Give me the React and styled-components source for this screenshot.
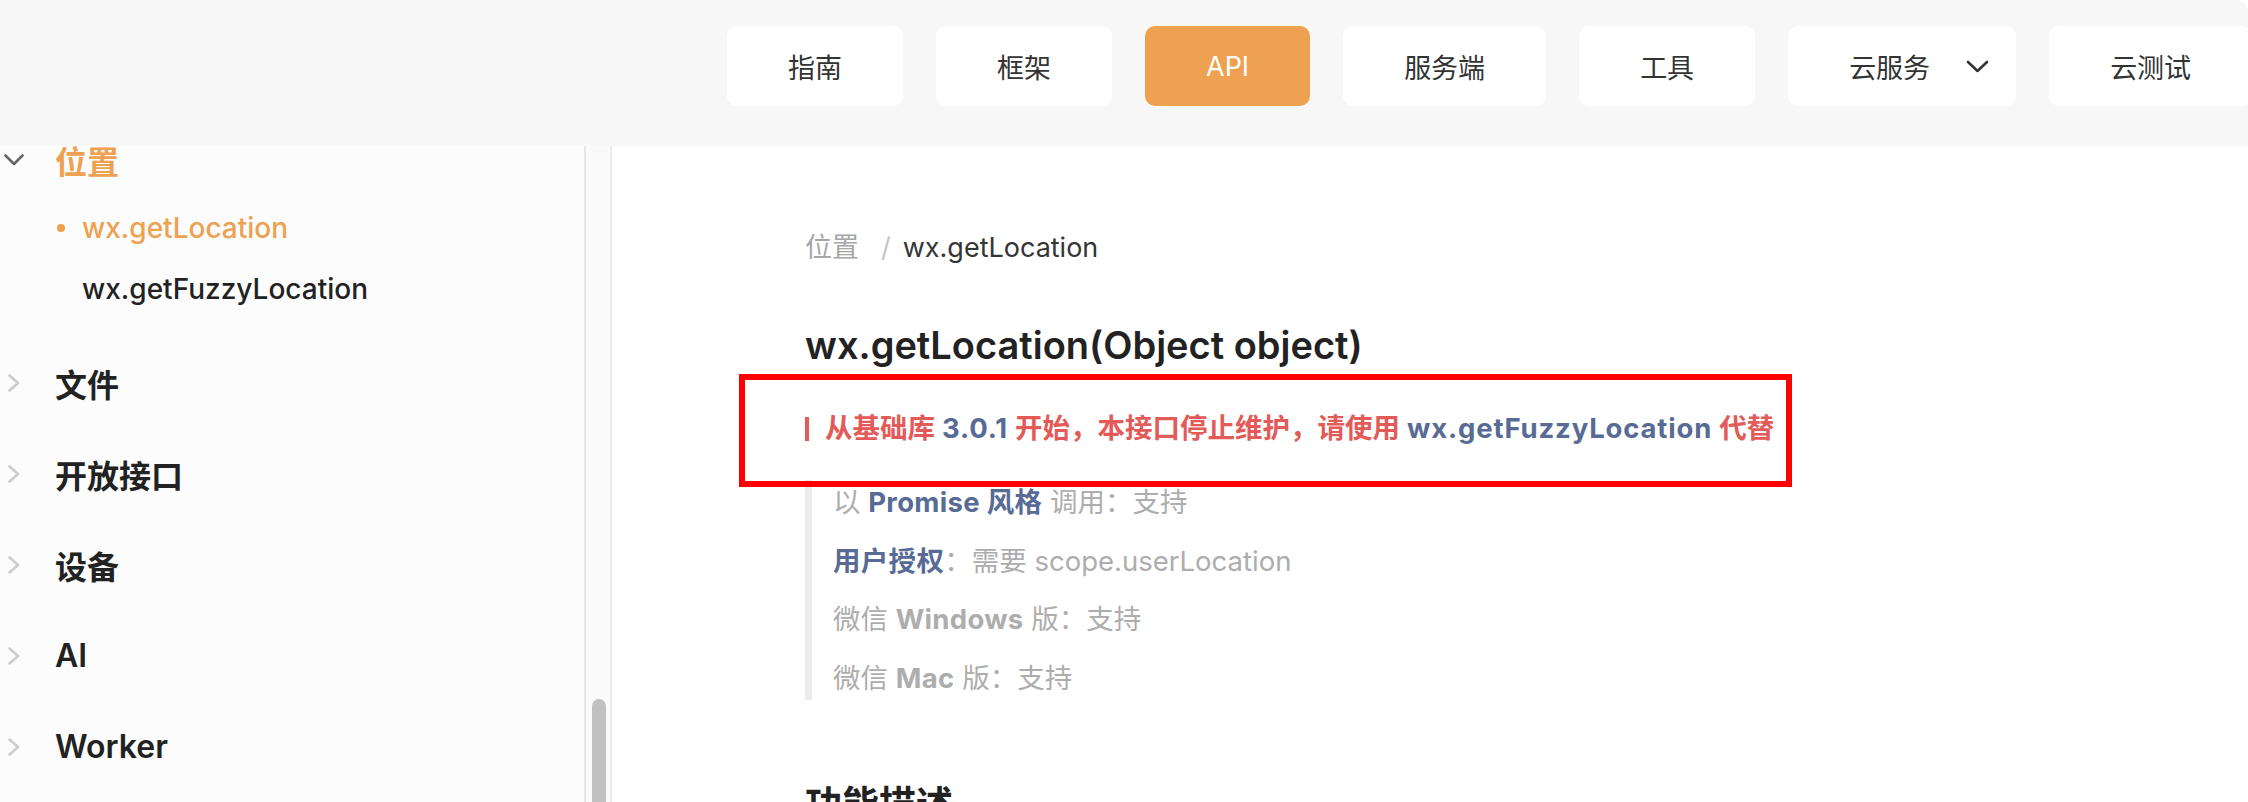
import React from "react";
import styled, { createGlobalStyle, css } from "styled-components";

const GlobalStyle = createGlobalStyle`
  html, body {
    margin: 0;
    padding: 0;
    background: #ffffff;
  }
  body {
    font-family: Inter, "Noto Sans CJK SC", "Noto Sans", sans-serif;
    color: #222222;
  }
`;

const ORANGE = "#eda151";
const LINK = "#576b95";

const Page = styled.div`
  height: 100vh;
  display: flex;
  flex-direction: column;
  overflow: hidden;
`;

const Header = styled.header`
  flex-shrink: 0;
  height: 146px;
  box-sizing: border-box;
  background: #f7f7f7;
  border-top-right-radius: 12px;
  display: flex;
  align-items: flex-start;
  gap: 33px;
  padding: 26px 0 0 727px;
  overflow: hidden;
  white-space: nowrap;
`;

const NavButton = styled.div`
  flex-shrink: 0;
  height: 80px;
  box-sizing: border-box;
  padding: 0 61px;
  border-radius: 10px;
  display: flex;
  align-items: center;
  font-size: 27px;
  color: #333333;
  background: #ffffff;

  ${({ active }) =>
    active &&
    css`
      background: ${ORANGE};
      color: #ffffff;
    `}

  ${({ dropdown }) =>
    dropdown &&
    css`
      padding-right: 27px;
    `}
`;

const NavCaret = styled.svg`
  width: 23px;
  height: 13px;
  margin-left: 36px;
`;

const Body = styled.div`
  flex: 1;
  min-height: 0;
  display: flex;
`;

const Sidebar = styled.aside`
  width: 584px;
  flex-shrink: 0;
  background: #fcfcfc;
  border-right: 2px solid #e6e6e6;
  overflow: hidden;
`;

const SideList = styled.div`
  margin-top: -32px;
`;

const GroupRow = styled.div`
  height: 91px;
  display: flex;
  align-items: center;
`;

const ChevronCell = styled.div`
  width: 55px;
  flex-shrink: 0;
  display: flex;
  align-items: center;
  padding-left: ${({ open }) => (open ? "4px" : "8px")};
  box-sizing: border-box;
`;

const GroupLabel = styled.span`
  font-size: 32px;
  font-weight: 600;
  color: ${({ active }) => (active ? ORANGE : "#222222")};
`;

const SubList = styled.div`
  margin-top: -8px;
  padding-bottom: 18px;
`;

const SubRow = styled.div`
  height: 61px;
  display: flex;
  align-items: center;
  padding-left: 57px;
  font-size: 28px;
  font-weight: 500;
  color: ${({ active }) => (active ? ORANGE : "#222222")};
`;

const Dot = styled.span`
  width: 8px;
  height: 8px;
  border-radius: 50%;
  margin-right: 17px;
  background: ${({ active }) => (active ? ORANGE : "transparent")};
`;

const ScrollTrack = styled.div`
  width: 26px;
  flex-shrink: 0;
  box-sizing: border-box;
  background: #fafafa;
  border-right: 2px solid #ebebeb;
  padding: 553px 4px 0 6px;
  display: flex;
`;

const ScrollThumb = styled.div`
  flex: 1;
  background: #c1c1c1;
  border-radius: 8px 8px 0 0;
`;

const Main = styled.main`
  flex: 1;
  min-width: 0;
  background: #ffffff;
  padding: 82px 0 0 193px;
  overflow: hidden;
`;

const Breadcrumb = styled.div`
  font-size: 27px;
  line-height: 40px;
  margin-bottom: 52px;
  color: #353535;
  display: flex;
  align-items: center;
`;

const Crumb = styled.span`
  color: #a6a6a6;
`;

const Slash = styled.span`
  color: #c4c4c4;
  margin: 0 12px 0 22px;
`;

const Title = styled.h1`
  margin: 0 0 36px;
  font-size: 38px;
  line-height: 50px;
  font-weight: 600;
  color: #222222;
`;

const Notice = styled.p`
  position: relative;
  margin: 0 0 30px;
  font-size: 27.5px;
  line-height: 44px;
  font-weight: 600;
  color: #e35b58;
  white-space: nowrap;

  &::after {
    content: "";
    position: absolute;
    top: -32px;
    left: -66px;
    width: 1053px;
    height: 113px;
    box-sizing: border-box;
    border: 6px solid #ff0000;
    pointer-events: none;
  }
`;

const NoticeBar = styled.span`
  display: inline-block;
  width: 4px;
  height: 24px;
  margin-right: 16px;
  vertical-align: -3px;
  background: #e35b58;
`;

const Link = styled.span`
  color: ${LINK};
  font-weight: 700;
  letter-spacing: 0.85px;
`;

const Quote = styled.div`
  border-left: 7px solid #ececec;
  padding-left: 21px;
`;

const QuoteLine = styled.p`
  margin: 0 0 14.7px;
  font-size: 27.5px;
  line-height: 44px;
  color: #adadad;

  &:last-child {
    margin-bottom: 0;
  }
`;

const Strong = styled.b`
  font-weight: 700;
  letter-spacing: 0.3px;
  color: ${({ link }) => (link ? LINK : "#adadad")};
`;

const SectionTitle = styled.h2`
  margin: 80px 0 0;
  font-size: 37px;
  line-height: 50px;
  font-weight: 700;
  color: #222222;
`;

const ChevronDown = () => (
  <svg width="20" height="12" viewBox="0 0 20 12">
    <polyline
      points="1.5,1.5 10,10 18.5,1.5"
      fill="none"
      stroke="#666666"
      strokeWidth="2.6"
      strokeLinecap="round"
      strokeLinejoin="round"
    />
  </svg>
);

const ChevronRight = () => (
  <svg width="12" height="18" viewBox="0 0 12 18">
    <polyline
      points="1.5,1.5 10,9 1.5,16.5"
      fill="none"
      stroke="#cccccc"
      strokeWidth="2.6"
      strokeLinecap="round"
      strokeLinejoin="round"
    />
  </svg>
);

const navItems = [
  { label: "指南" },
  { label: "框架" },
  { label: "API", active: true },
  { label: "服务端" },
  { label: "工具" },
  { label: "云服务", dropdown: true },
  { label: "云测试" },
];

const groups = [
  {
    label: "位置",
    open: true,
    items: [
      { label: "wx.getLocation", active: true },
      { label: "wx.getFuzzyLocation" },
    ],
  },
  { label: "文件" },
  { label: "开放接口" },
  { label: "设备" },
  { label: "AI" },
  { label: "Worker" },
];

const App = () => (
  <>
    <GlobalStyle />
    <Page>
      <Header>
        {navItems.map((item) => (
          <NavButton key={item.label} active={item.active} dropdown={item.dropdown}>
            {item.label}
            {item.dropdown && (
              <NavCaret viewBox="0 0 23 13">
                <polyline
                  points="2,2 11.5,11 21,2"
                  fill="none"
                  stroke="#333333"
                  strokeWidth="2.6"
                  strokeLinecap="round"
                  strokeLinejoin="round"
                />
              </NavCaret>
            )}
          </NavButton>
        ))}
      </Header>

      <Body>
        <Sidebar>
          <SideList>
            {groups.map((group) => (
              <React.Fragment key={group.label}>
                <GroupRow>
                  <ChevronCell open={group.open}>
                    {group.open ? <ChevronDown /> : <ChevronRight />}
                  </ChevronCell>
                  <GroupLabel active={group.open}>{group.label}</GroupLabel>
                </GroupRow>
                {group.items && (
                  <SubList>
                    {group.items.map((item) => (
                      <SubRow key={item.label} active={item.active}>
                        <Dot active={item.active} />
                        {item.label}
                      </SubRow>
                    ))}
                  </SubList>
                )}
              </React.Fragment>
            ))}
          </SideList>
        </Sidebar>

        <ScrollTrack>
          <ScrollThumb />
        </ScrollTrack>

        <Main>
          <Breadcrumb>
            <Crumb>位置</Crumb>
            <Slash>/</Slash>
            wx.getLocation
          </Breadcrumb>

          <Title>wx.getLocation(Object object)</Title>

          <Notice>
            <NoticeBar />
            从基础库 <Link>3.0.1</Link> 开始，本接口停止维护，请使用{" "}
            <Link>wx.getFuzzyLocation</Link> 代替
          </Notice>

          <Quote>
            <QuoteLine>
              以 <Strong link>Promise 风格</Strong> 调用：支持
            </QuoteLine>
            <QuoteLine>
              <Strong link>用户授权</Strong>：需要 scope.userLocation
            </QuoteLine>
            <QuoteLine>
              微信 <Strong>Windows</Strong> 版：支持
            </QuoteLine>
            <QuoteLine>
              微信 <Strong>Mac</Strong> 版：支持
            </QuoteLine>
          </Quote>

          <SectionTitle>功能描述</SectionTitle>
        </Main>
      </Body>
    </Page>
  </>
);

export default App;
